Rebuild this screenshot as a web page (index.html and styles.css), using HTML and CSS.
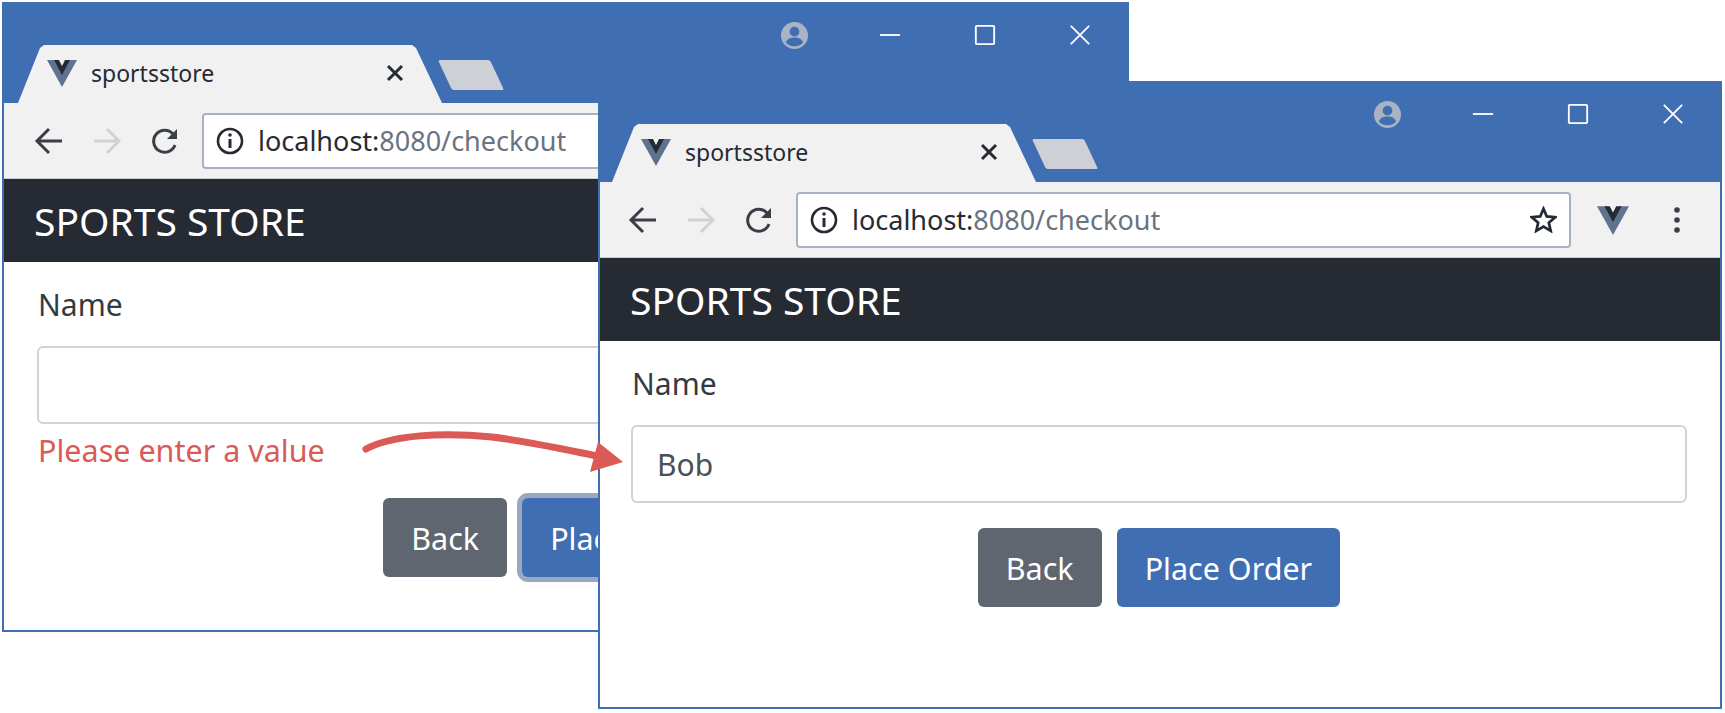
FILE: index.html
```html
<!DOCTYPE html>
<html lang="en">
<head>
  <meta charset="UTF-8">
  <title>sportsstore</title>
  <link rel="stylesheet" href="styles.css">
</head>
<body>
  <!-- shared icons -->
  <svg class="icon-defs" aria-hidden="true">
    <symbol id="i-vue" viewBox="0 0 30 28">
      <polygon points="0,1 9,1 15,11 21,1 30,1 15,28" fill="#5f7390"/>
      <polygon points="7,1 12,1 15,7 18,1 23,1 15,16" fill="#262a33"/>
    </symbol>
    <symbol id="i-profile" viewBox="0 0 30 30">
      <circle cx="15" cy="15" r="14" fill="#a9b3c4"/>
      <circle cx="15" cy="11" r="5" fill="#406eb3"/>
      <path d="M6 22c2-4 5-5 9-5s7 1 9 5c-2 3-5 4-9 4s-7-1-9-4z" fill="#406eb3"/>
    </symbol>
    <symbol id="i-min" viewBox="0 0 24 24"><path d="M1 12h22" fill="none" stroke="#fff" stroke-width="2"/></symbol>
    <symbol id="i-max" viewBox="0 0 24 24"><rect x="2" y="2" width="20" height="20" rx="1" fill="none" stroke="#fff" stroke-width="2"/></symbol>
    <symbol id="i-close" viewBox="0 0 24 24"><path d="M2 2l20 20M22 2L2 22" fill="none" stroke="#fff" stroke-width="2"/></symbol>
    <symbol id="i-tabx" viewBox="0 0 18 18"><path d="M2 2l14 14M16 2L2 16" fill="none" stroke="#262a33" stroke-width="3"/></symbol>
    <symbol id="i-back" viewBox="0 0 30 30"><path d="M28 15H4M15 3L3 15l12 12" fill="none" stroke="currentColor" stroke-width="3"/></symbol>
    <symbol id="i-forward" viewBox="0 0 30 30"><path d="M2 15h24M15 3l12 12-12 12" fill="none" stroke="currentColor" stroke-width="3"/></symbol>
    <symbol id="i-reload" viewBox="0 0 30 30">
      <path d="M25 19a11 11 0 1 1-2-11" fill="none" stroke="#3a3f47" stroke-width="3"/>
      <polygon points="27,3 27,13 17,13" fill="#3a3f47"/>
    </symbol>
    <symbol id="i-info" viewBox="0 0 28 28">
      <circle cx="14" cy="14" r="12" fill="none" stroke="#262a33" stroke-width="2.6"/>
      <path d="M14 12v9" stroke="#262a33" stroke-width="3"/>
      <circle cx="14" cy="8" r="1.8" fill="#262a33"/>
    </symbol>
    <symbol id="i-star" viewBox="0 0 30 30">
      <polygon points="15,3 18.6,11.6 28,12.4 20.9,18.5 23,27.6 15,22.8 7,27.6 9.1,18.5 2,12.4 11.4,11.6" fill="none" stroke="#262a33" stroke-width="3"/>
    </symbol>
    <symbol id="i-dots" viewBox="0 0 8 28">
      <circle cx="4" cy="4" r="2.8" fill="#3a3f47"/>
      <circle cx="4" cy="14" r="2.8" fill="#3a3f47"/>
      <circle cx="4" cy="24" r="2.8" fill="#3a3f47"/>
    </symbol>
  </svg>

  <!-- first window: validation error -->
  <div class="window window-error">
    <div class="titlebar">
      <div class="tab">
        <svg class="tab-icon"><use href="#i-vue"/></svg>
        <span class="tab-title">sportsstore</span>
        <svg class="tab-close"><use href="#i-tabx"/></svg>
      </div>
      <div class="new-tab"></div>
      <div class="win-controls">
        <span class="win-btn"><svg class="i-profile"><use href="#i-profile"/></svg></span>
        <span class="win-btn"><svg class="i-win"><use href="#i-min"/></svg></span>
        <span class="win-btn"><svg class="i-win"><use href="#i-max"/></svg></span>
        <span class="win-btn"><svg class="i-win"><use href="#i-close"/></svg></span>
      </div>
    </div>
    <div class="toolbar">
      <span class="tool"><svg class="i-tool"><use href="#i-back"/></svg></span>
      <span class="tool disabled"><svg class="i-tool"><use href="#i-forward"/></svg></span>
      <span class="tool"><svg class="i-tool"><use href="#i-reload"/></svg></span>
      <div class="omnibox">
        <svg class="i-info"><use href="#i-info"/></svg>
        <span class="url"><b>localhost:</b>8080/checkout</span>
        <svg class="i-star"><use href="#i-star"/></svg>
      </div>
      <span class="tool ext"><svg class="i-ext"><use href="#i-vue"/></svg></span>
      <span class="tool menu"><svg class="i-dots"><use href="#i-dots"/></svg></span>
    </div>
    <div class="navbar">SPORTS STORE</div>
    <div class="page">
      <label class="field-label">Name</label>
      <input class="field" type="text" value="">
      <div class="field-error">Please enter a value</div>
      <div class="actions">
        <button class="btn btn-back">Back</button>
        <button class="btn btn-primary focused">Place Order</button>
      </div>
    </div>
  </div>

  <!-- second window: value entered -->
  <div class="window window-valid">
    <div class="titlebar">
      <div class="tab">
        <svg class="tab-icon"><use href="#i-vue"/></svg>
        <span class="tab-title">sportsstore</span>
        <svg class="tab-close"><use href="#i-tabx"/></svg>
      </div>
      <div class="new-tab"></div>
      <div class="win-controls">
        <span class="win-btn"><svg class="i-profile"><use href="#i-profile"/></svg></span>
        <span class="win-btn"><svg class="i-win"><use href="#i-min"/></svg></span>
        <span class="win-btn"><svg class="i-win"><use href="#i-max"/></svg></span>
        <span class="win-btn"><svg class="i-win"><use href="#i-close"/></svg></span>
      </div>
    </div>
    <div class="toolbar">
      <span class="tool"><svg class="i-tool"><use href="#i-back"/></svg></span>
      <span class="tool disabled"><svg class="i-tool"><use href="#i-forward"/></svg></span>
      <span class="tool"><svg class="i-tool"><use href="#i-reload"/></svg></span>
      <div class="omnibox">
        <svg class="i-info"><use href="#i-info"/></svg>
        <span class="url"><b>localhost:</b>8080/checkout</span>
        <svg class="i-star"><use href="#i-star"/></svg>
      </div>
      <span class="tool ext"><svg class="i-ext"><use href="#i-vue"/></svg></span>
      <span class="tool menu"><svg class="i-dots"><use href="#i-dots"/></svg></span>
    </div>
    <div class="navbar">SPORTS STORE</div>
    <div class="page">
      <label class="field-label">Name</label>
      <input class="field" type="text" value="Bob">
      <div class="actions">
        <button class="btn btn-back">Back</button>
        <button class="btn btn-primary">Place Order</button>
      </div>
    </div>
  </div>

  <!-- callout arrow -->
  <svg class="callout" viewBox="0 0 300 60">
    <path d="M4 29C30 15 80 12 130 17C170 22 205 30 240 37" fill="none" stroke="#dc5a55" stroke-width="7" stroke-linecap="round"/>
    <polygon points="261,42 228,52 236,22" fill="#dc5a55"/>
  </svg>
</body>
</html>
```

FILE: styles.css
```css
body {
  margin: 0;
  width: 1725px;
  height: 713px;
  overflow: hidden;
  position: relative;
  background: #fff;
  font-family: "Noto Sans", "Open Sans", sans-serif;
  color: #343a40;
}
.icon-defs {
  position: absolute;
  width: 0;
  height: 0;
}

/* windows sit on a free canvas */
.window {
  position: absolute;
  box-sizing: border-box;
  display: flex;
  flex-direction: column;
  background: #fff;
  border: 2px solid #406eb3;
  border-top: 0;
}
.window-error {
  left: 2px;
  top: 2px;
  width: 1127px;
  height: 630px;
}
.window-valid {
  left: 598px;
  top: 81px;
  width: 1124px;
  height: 628px;
  z-index: 1;
}

/* title bar */
.titlebar {
  display: flex;
  align-items: flex-end;
  height: 101px;
  flex: none;
  background: #406eb3;
}
.tab {
  display: flex;
  align-items: center;
  box-sizing: border-box;
  width: 424px;
  height: 58px;
  margin-left: 14px;
  padding: 0 38px 3px 29px;
  background: #f1f1f2;
  clip-path: polygon(0 100%, 22px 3px, 26px 0, 394px 0, 398px 3px, 100% 100%);
}
.window-valid .tab {
  margin-left: 12px;
}
.tab-icon {
  width: 30px;
  height: 28px;
  flex: none;
}
.tab-title {
  margin-left: 14px;
  font-size: 23px;
  color: #262a33;
}
.tab-close {
  width: 18px;
  height: 18px;
  margin-left: auto;
}
.new-tab {
  width: 52px;
  height: 30px;
  margin: 0 0 13px 3px;
  background: #cdd0d6;
  border-radius: 2px;
  transform: skewX(25deg);
}
.win-controls {
  display: flex;
  margin-left: auto;
  align-self: flex-start;
}
.win-btn {
  display: flex;
  align-items: center;
  justify-content: center;
  width: 95px;
  height: 66px;
}
.i-profile {
  width: 29px;
  height: 29px;
}
.i-win {
  width: 22px;
  height: 22px;
}

/* toolbar */
.toolbar {
  display: flex;
  align-items: center;
  height: 76px;
  flex: none;
  padding-left: 14px;
  background: #f1f1f2;
  border-bottom: 1px solid #c9ccd2;
  box-sizing: border-box;
}
.window-error .toolbar {
  padding-left: 16px;
}
.tool {
  display: flex;
  align-items: center;
  justify-content: center;
  flex: none;
  width: 58px;
  color: #3a3f47;
}
.tool.disabled {
  color: #d0d2d6;
}
.i-tool {
  width: 30px;
  height: 30px;
}
.omnibox {
  display: flex;
  align-items: center;
  flex: 1;
  box-sizing: border-box;
  height: 56px;
  margin-left: 8px;
  padding: 0 12px 0 12px;
  background: #fff;
  border: 2px solid #a6b1c4;
  border-radius: 4px;
}
.i-info {
  width: 28px;
  height: 28px;
  flex: none;
}
.url {
  margin-left: 14px;
  font-size: 27px;
  color: #6b7280;
  white-space: nowrap;
}
.url b {
  font-weight: normal;
  color: #262a33;
}
.i-star {
  width: 27px;
  height: 27px;
  margin-left: auto;
  flex: none;
}
.tool.ext {
  width: 84px;
}
.tool.menu {
  width: 44px;
  margin-right: 21px;
}
.i-ext {
  width: 32px;
  height: 30px;
}
.i-dots {
  width: 8px;
  height: 28px;
}

/* app */
.navbar {
  flex: none;
  height: 83px;
  line-height: 83px;
  padding-left: 30px;
  background: #262a33;
  color: #fff;
  font-size: 39px;
}
.page {
  display: flex;
  flex-direction: column;
  padding: 24px 33px 0 31px;
}
.window-error .page {
  padding: 24px 35px 0 33px;
}
.field-label {
  font-size: 30px;
  line-height: 38px;
  margin: 0 0 22px 1px;
}
.field {
  box-sizing: border-box;
  width: 100%;
  height: 78px;
  padding: 0 24px;
  font: 30px "Noto Sans", "Open Sans", sans-serif;
  color: #495057;
  border: 2px solid #ced4da;
  border-radius: 6px;
  outline: none;
}
.field-error {
  font-size: 30.5px;
  line-height: 38px;
  margin: 7px 0 0 1px;
  color: #dc5a55;
}
.actions {
  display: flex;
  justify-content: center;
  gap: 15px;
  margin-top: 25px;
}
.field-error + .actions {
  margin-top: 29px;
}
.btn {
  height: 79px;
  padding: 0 28px;
  font: 30.5px "Noto Sans", "Open Sans", sans-serif;
  color: #fff;
  border: 0;
  border-radius: 6px;
}
.btn-back {
  background: #5f6670;
}
.btn-primary {
  background: #406eb3;
}
.btn.focused {
  box-shadow: 0 0 0 5px #9aa8c0;
}

/* arrow between the two windows */
.callout {
  position: absolute;
  left: 362px;
  top: 420px;
  width: 300px;
  height: 60px;
  z-index: 2;
}
```
